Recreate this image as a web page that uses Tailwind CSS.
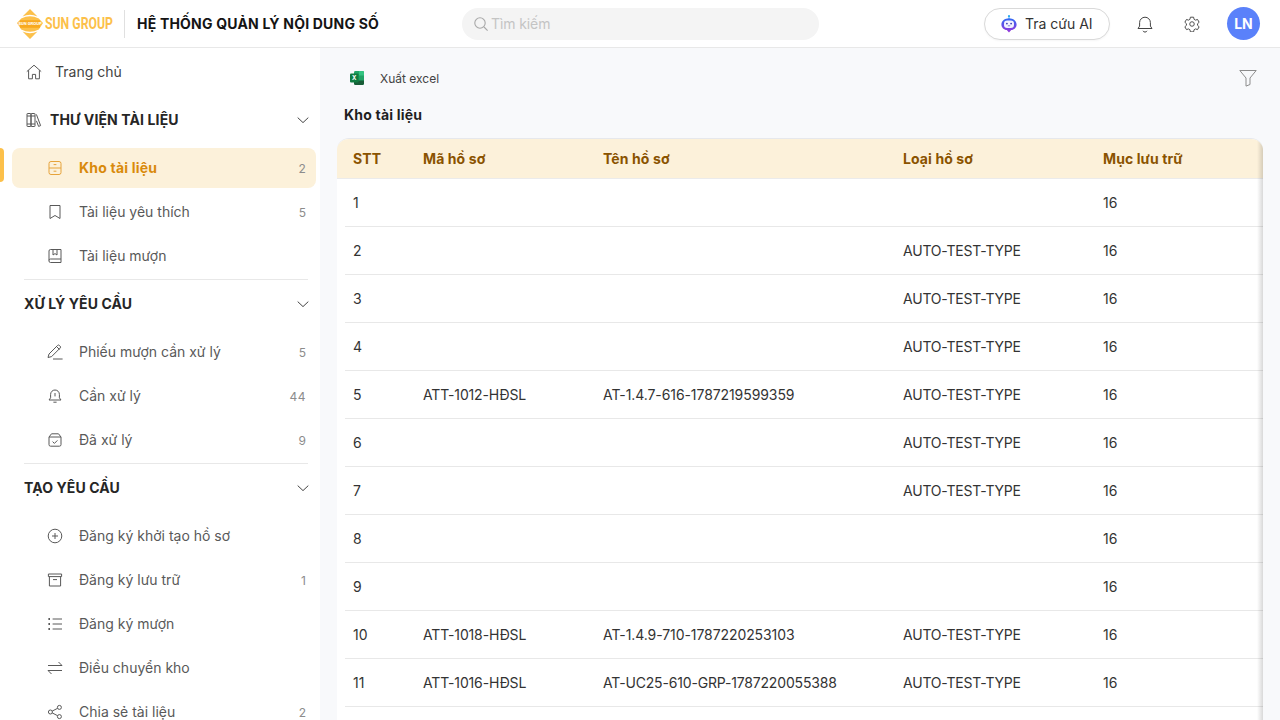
<!DOCTYPE html>
<html lang="vi">
<head>
    <meta charset="UTF-8">
    <title>Hệ thống quản lý nội dung số</title>
    <script src="https://cdn.jsdelivr.net/npm/@tailwindcss/browser@4"></script>
</head>
<body class="h-screen overflow-hidden bg-white font-['Inter','Noto_Sans',sans-serif] text-[#1f1f1f]">

    <!-- Header -->
    <header class="h-12 flex items-center border-b border-[#e8e8e8] bg-white">
        <div class="w-[462px] flex items-center shrink-0">
            <div class="flex items-center ml-[17px] w-[107px]">
                <svg class="w-[26px] h-[30px] shrink-0" viewBox="0 0 26 30">
                    <path d="M13 0 L20.5 7.6 Q13 4 5.5 7.6 Z" fill="#fcc04a"/>
                    <path d="M4.2 9.4 Q13 5 21.8 9.4 L26 14 L21.8 20.6 Q13 25 4.2 20.6 L0 14 Z" fill="#fcc04a"/>
                    <path d="M3 11.2 H23 V18.8 H3 Z" fill="#f8a91f"/>
                    <path d="M5.5 22.4 Q13 26 20.5 22.4 L13 30 Z" fill="#fcc04a"/>
                    <text x="13" y="16.4" font-size="4.2" font-weight="700" fill="#fff" text-anchor="middle" font-family="Roboto">SUN GROUP</text>
                </svg>
                <span class="ml-[2px] font-['Roboto',sans-serif] font-bold text-[17px] leading-none text-[#fcc04a] whitespace-nowrap origin-left scale-x-[0.72]">SUN GROUP</span>
            </div>
            <div class="w-px h-7 bg-[#e0e0e0]"></div>
            <h1 class="ml-3 text-sm font-bold tracking-[0.2px] text-[#141414] whitespace-nowrap">HỆ THỐNG QUẢN LÝ NỘI DUNG SỐ</h1>
        </div>

        <div class="w-[357px] h-8 rounded-full bg-[#f4f4f4] flex items-center pl-[11px] gap-[2px] shrink-0">
            <svg class="w-4 h-4 text-[#a8a8a8]" viewBox="0 0 16 16" fill="none" stroke="currentColor" stroke-width="1.1"><circle cx="7" cy="7" r="5.2"/><path d="M11 11l3.6 3.6"/></svg>
            <span class="text-sm tracking-[-0.1px] text-[#c4c4c4]">Tìm kiếm</span>
        </div>

        <div class="ml-auto flex items-center pr-[20px]">
            <button class="w-[126px] h-8 rounded-full border border-[#d9d9d9] bg-white flex items-center pl-4 gap-2 shadow-[0_1px_2px_rgba(0,0,0,0.04)]">
                <svg class="w-4 h-[18px] shrink-0" viewBox="0 0 16 18">
                    <defs><linearGradient id="botGrad" x1="0" y1="0" x2="0" y2="1"><stop offset="0" stop-color="#2f6bf5"/><stop offset="1" stop-color="#9a33d8"/></linearGradient></defs>
                    <circle cx="8" cy="1.2" r="1.1" fill="#29a8f0"/>
                    <path d="M7.6 2h.8v2h-.8z" fill="#29a8f0"/>
                    <path d="M8 3.2c4.2 0 7.6 2.8 7.6 6.2 0 3.2-2.6 5.4-5.4 5.6L8 17.6 5.8 15C3 14.8.4 12.6.4 9.4.4 6 3.8 3.2 8 3.2z" fill="url(#botGrad)"/>
                    <rect x="3" y="5.6" width="10" height="7.4" rx="3.2" fill="#f2f2ff"/>
                    <circle cx="5.9" cy="8.6" r=".9" fill="#3b3bb8"/><circle cx="10.1" cy="8.6" r=".9" fill="#3b3bb8"/>
                    <path d="M6.8 10.8h2.4" stroke="#3b3bb8" stroke-width=".6"/>
                </svg>
                <span class="text-sm text-[#333] whitespace-nowrap">Tra cứu AI</span>
            </button>
            <svg class="w-4 h-[18px] ml-[27px] text-[#444]" viewBox="0 0 16 18" fill="none" stroke="currentColor" stroke-width="1"><path d="M1 13.5h14l-1.6-2.4V7.6a5.4 5.4 0 0 0-10.8 0v3.5z" stroke-linejoin="round"/><path d="M6 15.8a2.2 2.2 0 0 0 4 0"/></svg>
            <svg class="w-4 h-4 ml-[31px] text-[#444]" viewBox="0 0 24 24" fill="none" stroke="currentColor" stroke-width="1.4"><circle cx="12" cy="12" r="3.4"/><path d="M9.6 1.8h4.8l.7 3.2 2.1 1.2 3.1-1 2.4 4.2-2.4 2.2v2.4l2.4 2.2-2.4 4.2-3.1-1-2.1 1.2-.7 3.2H9.6l-.7-3.2-2.1-1.2-3.1 1-2.4-4.2 2.4-2.2v-2.4L1.3 9.4l2.4-4.2 3.1 1 2.1-1.2z" stroke-linejoin="round"/></svg>
            <div class="w-[33px] h-[33px] ml-[27px] rounded-full bg-[#5a81fa] flex items-center justify-center text-sm font-bold text-white">LN</div>
        </div>
    </header>

    <div class="flex h-[672px]">
        <!-- Sidebar -->
        <aside class="w-80 shrink-0 bg-white pt-1 relative overflow-hidden text-sm text-[#595959]">
            <a class="h-10 mb-2 flex items-center pl-[26px] text-[#434343]">
                <svg class="w-4 h-4 mr-[13px]" viewBox="0 0 16 16" fill="none" stroke="#595959" stroke-width="1"><path d="M.8 7.6 8 1.2l7.2 6.4M2.6 6.2v8.6h3.8v-4.4h3.2v4.4h3.8V6.2" stroke-linejoin="round"/></svg>
                Trang chủ
            </a>

            <div class="h-10 mb-2 flex items-center pl-[26px] pr-[11px] font-bold tracking-[0.12px] text-[#262626]">
                <svg class="w-4 h-4 mr-2" viewBox="0 0 16 16" fill="none" stroke="#595959" stroke-width="1"><rect x="1" y="1.5" width="4" height="13" rx=".5"/><rect x="5" y="1.5" width="4" height="13" rx=".5"/><path d="M1 4h8M1 12h8M10.4 2.4l4.2 11.2-2 .8-2.2-5.6"/></svg>
                THƯ VIỆN TÀI LIỆU
                <svg class="w-3 h-3 ml-auto" viewBox="0 0 12 12" fill="none" stroke="#434343" stroke-width="1"><path d="M.7 3.6 6 8.6l5.3-5"/></svg>
            </div>

            <div class="absolute left-0 top-[100px] w-1 h-[34px] bg-[#fcc04a] rounded-r"></div>
            <a class="h-10 mb-1 mx-3 w-[304px] rounded-lg bg-[#fcf1da] flex items-center pl-[35px] pr-[10px] font-bold tracking-[0.2px] text-[#d98a0b]">
                <svg class="w-4 h-4 mr-4 shrink-0" viewBox="0 0 16 16" fill="none" stroke="#e6a33a" stroke-width="1"><rect x="2" y="1.5" width="12" height="13" rx="2"/><path d="M2 8h12M6.6 4.6h2.8M6.6 11.2h2.8"/></svg>
                Kho tài liệu
                <span class="ml-auto mt-px text-xs font-normal text-[#8c8c8c]">2</span>
            </a>
            <a class="h-10 mb-1 mx-3 w-[304px] flex items-center pl-[35px] pr-[10px]">
                <svg class="w-4 h-4 mr-4 shrink-0" viewBox="0 0 16 16" fill="none" stroke="#595959" stroke-width="1"><path d="M3 1.5h10v13l-5-3-5 3z" stroke-linejoin="round"/></svg>
                Tài liệu yêu thích
                <span class="ml-auto mt-px text-xs text-[#8c8c8c]">5</span>
            </a>
            <a class="h-10 mx-3 w-[304px] flex items-center pl-[35px] pr-[10px]">
                <svg class="w-4 h-4 mr-4 shrink-0" viewBox="0 0 16 16" fill="none" stroke="#595959" stroke-width="1"><path d="M2 12.5V3a1.5 1.5 0 0 1 1.5-1.5H14v13H3.5A1.5 1.5 0 0 1 2 13V12.5a1.5 1.5 0 0 1 1.5-1.5H14M6 1.5v5.5l2-1.4 2 1.4V1.5"/></svg>
                Tài liệu mượn
            </a>
            <div class="ml-6 mr-3 mt-[3px] mb-1 h-px bg-[#e8e8e8]"></div>

            <div class="h-10 mb-2 flex items-center pl-6 pr-[11px] font-bold tracking-[0.1px] text-[#262626]">
                XỬ LÝ YÊU CẦU
                <svg class="w-3 h-3 ml-auto" viewBox="0 0 12 12" fill="none" stroke="#434343" stroke-width="1"><path d="M.7 3.6 6 8.6l5.3-5"/></svg>
            </div>
            <a class="h-10 mb-1 mx-3 w-[304px] flex items-center pl-[35px] pr-[10px]">
                <svg class="w-4 h-4 mr-4 shrink-0" viewBox="0 0 16 16" fill="none" stroke="#595959" stroke-width="1"><path d="M1 13.5 2 10 10.5 1.5a1.4 1.4 0 0 1 2 0l.6.6a1.4 1.4 0 0 1 0 2L4.6 12.6zM9.5 2.5l3 3M6 15h9.6" stroke-linejoin="round"/></svg>
                Phiếu mượn cần xử lý
                <span class="ml-auto mt-px text-xs text-[#8c8c8c]">5</span>
            </a>
            <a class="h-10 mb-1 mx-3 w-[304px] flex items-center pl-[35px] pr-[10px]">
                <svg class="w-4 h-4 mr-4 shrink-0" viewBox="0 0 16 16" fill="none" stroke="#595959" stroke-width="1"><path d="M2 12h12l-1.6-2.2V6.4a4.4 4.4 0 0 0-8.8 0v3.4zM8 5v3.4M6.4 14.2h3.2" stroke-linejoin="round"/></svg>
                Cần xử lý
                <span class="ml-auto mt-px text-xs tracking-[0.5px] text-[#8c8c8c]">44</span>
            </a>
            <a class="h-10 mx-3 w-[304px] flex items-center pl-[35px] pr-[10px]">
                <svg class="w-4 h-4 mr-4 shrink-0" viewBox="0 0 16 16" fill="none" stroke="#595959" stroke-width="1"><path d="M4.5 1.8h7L14 5v7.6a1.6 1.6 0 0 1-1.6 1.6H3.6A1.6 1.6 0 0 1 2 12.6V5zM2 5h12M5.6 9.6l1.8 1.8 3-3"/></svg>
                Đã xử lý
                <span class="ml-auto mt-px text-xs text-[#8c8c8c]">9</span>
            </a>
            <div class="ml-6 mr-3 mt-[3px] mb-1 h-px bg-[#e8e8e8]"></div>

            <div class="h-10 mb-2 flex items-center pl-6 pr-[11px] font-bold tracking-[0.1px] text-[#262626]">
                TẠO YÊU CẦU
                <svg class="w-3 h-3 ml-auto" viewBox="0 0 12 12" fill="none" stroke="#434343" stroke-width="1"><path d="M.7 3.6 6 8.6l5.3-5"/></svg>
            </div>
            <a class="h-10 mb-1 mx-3 w-[304px] flex items-center pl-[35px] pr-[10px]">
                <svg class="w-4 h-4 mr-4 shrink-0" viewBox="0 0 16 16" fill="none" stroke="#595959" stroke-width="1"><circle cx="8" cy="8" r="6.8"/><path d="M8 5v6M5 8h6"/></svg>
                Đăng ký khởi tạo hồ sơ
            </a>
            <a class="h-10 mb-1 mx-3 w-[304px] flex items-center pl-[35px] pr-[10px]">
                <svg class="w-4 h-4 mr-4 shrink-0" viewBox="0 0 16 16" fill="none" stroke="#595959" stroke-width="1"><path d="M1.4 2h13.2v2.6H1.4zM2.4 4.6v9.4h11.2V4.6M6 7.6h4"/></svg>
                Đăng ký lưu trữ
                <span class="ml-auto mt-px text-xs text-[#8c8c8c]">1</span>
            </a>
            <a class="h-10 mb-1 mx-3 w-[304px] flex items-center pl-[35px] pr-[10px]">
                <svg class="w-4 h-4 mr-4 shrink-0" viewBox="0 0 16 16" fill="none" stroke="#595959" stroke-width="1"><path d="M5.6 3h9.4M5.6 8h9.4M5.6 13h9.4"/><path d="M1.4 3h1.6M1.4 8h1.6M1.4 13h1.6" stroke-width="2"/></svg>
                Đăng ký mượn
            </a>
            <a class="h-10 mb-1 mx-3 w-[304px] flex items-center pl-[35px] pr-[10px]">
                <svg class="w-4 h-4 mr-4 shrink-0" viewBox="0 0 16 16" fill="none" stroke="#595959" stroke-width="1"><path d="M1 5.5h14L11.5 2M15 10.5H1L4.5 14"/></svg>
                Điều chuyển kho
            </a>
            <a class="h-10 mx-3 w-[304px] flex items-center pl-[35px] pr-[10px]">
                <svg class="w-4 h-4 mr-4 shrink-0" viewBox="0 0 16 16" fill="none" stroke="#595959" stroke-width="1"><circle cx="3.4" cy="8" r="2"/><circle cx="12.4" cy="3.4" r="2"/><circle cx="12.4" cy="12.6" r="2"/><path d="M5.2 7.1l5.4-2.8M5.2 8.9l5.4 2.8"/></svg>
                Chia sẻ tài liệu
                <span class="ml-auto mt-px text-xs text-[#8c8c8c]">2</span>
            </a>
        </aside>

        <!-- Main -->
        <main class="flex-1 bg-[#f8f9fb] overflow-hidden pl-[17px] pr-[17px]">
            <div class="h-[60px] flex items-center pl-[12px] pr-[6px]">
                <svg class="w-[16px] h-[16px] shrink-0" viewBox="0 0 16 16">
                    <rect x="5" y="1" width="10" height="14" rx="1.4" fill="#21a366"/>
                    <path d="M10 1h3.6A1.4 1.4 0 0 1 15 2.4V5.6h-5z" fill="#33c481"/>
                    <path d="M5 10.4h10v3.2a1.4 1.4 0 0 1-1.4 1.4H6.4A1.4 1.4 0 0 1 5 13.6z" fill="#185c37"/>
                    <rect x="1" y="3.6" width="8.6" height="8.8" rx="1" fill="#107c41"/>
                    <text x="5.3" y="10.4" font-size="6" font-weight="700" fill="#fff" text-anchor="middle" font-family="Inter">X</text>
                </svg>
                <span class="ml-[15px] mt-[2px] text-xs text-[#434343]">Xuất excel</span>
                <svg class="ml-auto w-[18px] h-[18px] text-[#8c8c8c]" viewBox="0 0 18 18" fill="none" stroke="currentColor" stroke-width="1"><path d="M.8 1.5h16.4L11 9v6.5l-4 1.6V9z" stroke-linejoin="round"/></svg>
            </div>
            <h2 class="pl-[7px] h-[20px] mb-[13px] -mt-[3px] text-sm leading-5 font-bold tracking-[0.2px] text-[#1f1f1f]">Kho tài liệu</h2>

            <div class="w-[926px] bg-white rounded-t-xl border-t border-[#e6e8ec] overflow-hidden relative">
                <div class="h-10 bg-[#fcf1da] border-b border-[#ebebeb] flex items-center pl-4 text-sm font-bold tracking-[0.1px] text-[#8a5300]">
                    <div class="w-[70px]">STT</div>
                    <div class="w-[180px]">Mã hồ sơ</div>
                    <div class="w-[300px]">Tên hồ sơ</div>
                    <div class="w-[200px]">Loại hồ sơ</div>
                    <div>Mục lưu trữ</div>
                </div>
                <div class="pl-2 text-sm text-[#333]">
                    <div class="h-12 flex items-center pl-2 border-b border-[#e8e8e8]"><div class="w-[70px]">1</div><div class="w-[180px]"></div><div class="w-[300px]"></div><div class="w-[200px]"></div><div>16</div></div>
                    <div class="h-12 flex items-center pl-2 border-b border-[#e8e8e8]"><div class="w-[70px]">2</div><div class="w-[180px]"></div><div class="w-[300px]"></div><div class="w-[200px] tracking-[-0.2px]">AUTO-TEST-TYPE</div><div>16</div></div>
                    <div class="h-12 flex items-center pl-2 border-b border-[#e8e8e8]"><div class="w-[70px]">3</div><div class="w-[180px]"></div><div class="w-[300px]"></div><div class="w-[200px] tracking-[-0.2px]">AUTO-TEST-TYPE</div><div>16</div></div>
                    <div class="h-12 flex items-center pl-2 border-b border-[#e8e8e8]"><div class="w-[70px]">4</div><div class="w-[180px]"></div><div class="w-[300px]"></div><div class="w-[200px] tracking-[-0.2px]">AUTO-TEST-TYPE</div><div>16</div></div>
                    <div class="h-12 flex items-center pl-2 border-b border-[#e8e8e8]"><div class="w-[70px]">5</div><div class="w-[180px] tracking-[-0.15px]">ATT-1012-HĐSL</div><div class="w-[300px] tracking-[-0.08px]">AT-1.4.7-616-1787219599359</div><div class="w-[200px] tracking-[-0.2px]">AUTO-TEST-TYPE</div><div>16</div></div>
                    <div class="h-12 flex items-center pl-2 border-b border-[#e8e8e8]"><div class="w-[70px]">6</div><div class="w-[180px]"></div><div class="w-[300px]"></div><div class="w-[200px] tracking-[-0.2px]">AUTO-TEST-TYPE</div><div>16</div></div>
                    <div class="h-12 flex items-center pl-2 border-b border-[#e8e8e8]"><div class="w-[70px]">7</div><div class="w-[180px]"></div><div class="w-[300px]"></div><div class="w-[200px] tracking-[-0.2px]">AUTO-TEST-TYPE</div><div>16</div></div>
                    <div class="h-12 flex items-center pl-2 border-b border-[#e8e8e8]"><div class="w-[70px]">8</div><div class="w-[180px]"></div><div class="w-[300px]"></div><div class="w-[200px]"></div><div>16</div></div>
                    <div class="h-12 flex items-center pl-2 border-b border-[#e8e8e8]"><div class="w-[70px]">9</div><div class="w-[180px]"></div><div class="w-[300px]"></div><div class="w-[200px]"></div><div>16</div></div>
                    <div class="h-12 flex items-center pl-2 border-b border-[#e8e8e8]"><div class="w-[70px]">10</div><div class="w-[180px] tracking-[-0.15px]">ATT-1018-HĐSL</div><div class="w-[300px] tracking-[-0.08px]">AT-1.4.9-710-1787220253103</div><div class="w-[200px] tracking-[-0.2px]">AUTO-TEST-TYPE</div><div>16</div></div>
                    <div class="h-12 flex items-center pl-2 border-b border-[#e8e8e8]"><div class="w-[70px]">11</div><div class="w-[180px] tracking-[-0.15px]">ATT-1016-HĐSL</div><div class="w-[300px] tracking-[-0.17px]">AT-UC25-610-GRP-1787220055388</div><div class="w-[200px] tracking-[-0.2px]">AUTO-TEST-TYPE</div><div>16</div></div>
                    <div class="h-12"></div>
                </div>
                <!-- bóng cột cuối -->
                <div class="absolute top-0 right-0 bottom-0 w-[6px] bg-gradient-to-l from-black/15 to-transparent"></div>
            </div>
        </main>
    </div>

</body>
</html>
